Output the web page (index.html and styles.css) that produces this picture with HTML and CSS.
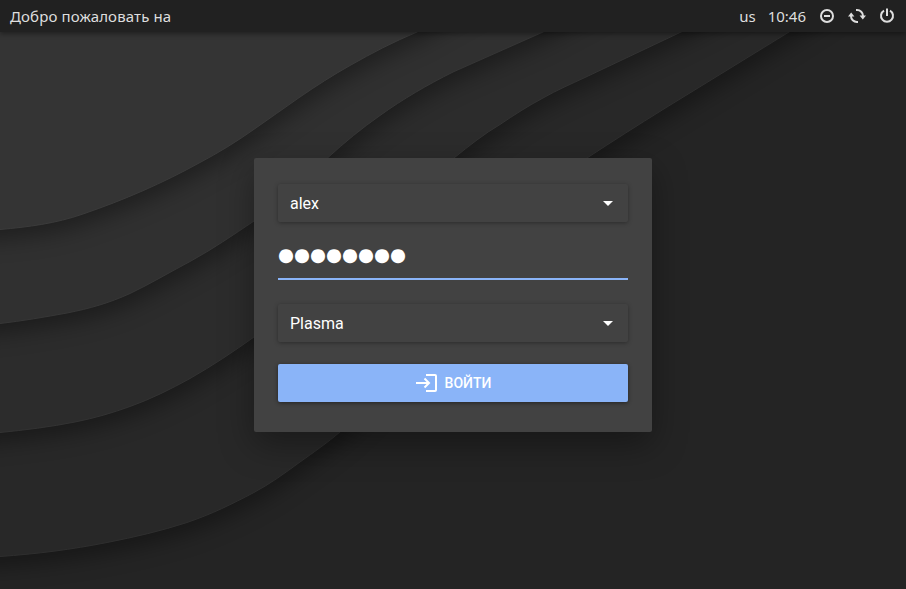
FILE: index.html
```html
<!DOCTYPE html>
<html lang="ru">
<head>
<meta charset="utf-8">
<title>Вход</title>
<link rel="stylesheet" href="styles.css">
</head>
<body>
<svg class="wallpaper" viewBox="0 0 906 589" aria-hidden="true">
  <defs>
    <filter id="shade" filterUnits="userSpaceOnUse" x="-60" y="-60" width="1026" height="709" color-interpolation-filters="sRGB">
      <feDropShadow dx="2" dy="9" stdDeviation="11" flood-color="#000" flood-opacity=".36"/>
    </filter>
  </defs>
  <g stroke-width="1">
    <path filter="url(#shade)" fill="#282828" stroke="#2f2f2f" d="M-50 560C-30 559 -15 557.500 0 556.500C36 554 72 549.500 107 542.500C135 537 161 531 187 522.500C212 514 232 504 253 493C270 484 285 473 300 462C314 452 327 443 340 432C420 366 500 216 587 158C613 141 638 125 663 109.500L789 32L869 -20H-50Z"/>
    <path filter="url(#shade)" fill="#2c2c2c" stroke="#333" d="M-50 438C-30 436 -15 434.500 0 432.500C25 430 50 427 75 422C95 418 112 413 130 406.500C151 399 171 389 190 378.500C212 366 233 352 254 337C330 282 390 208 454 158C470 145 484 134 500 124.500C514 115 528 106 543 98C557 90 571 84 586 77L681 32L781 -20H-50Z"/>
    <path filter="url(#shade)" fill="#303030" stroke="#373737" d="M-50 328C-30 326 -15 325 0 323.500C22 321 45 317 67 313C90 308.500 109 303 130 293.500C150 284 170 272 190 261.500C213 249 233 235 254 221C280 203 304 177 328 157.500C345 142 362 128 380 115.500C403 99 427 85 453 72L543 32L640 -20H-50Z"/>
    <path filter="url(#shade)" fill="#343434" stroke="#3b3b3b" d="M-50 232C-30 231.500 -15 230.500 0 229.500C28 227 56 223.500 83 214C124 200 163 183 200 162.500C218 153 236 142 253 130C269 119 284 108 300 97C316 86 333 75 350 65.500C372 53 393 42 417 32L510 -20H-50Z"/>
  </g>
</svg>
<div class="screen">
  <header class="bar">
    <span class="greeting">Добро пожаловать на</span>
    <div class="status">
      <span class="layout">us</span>
      <span class="clock">10:46</span>
      <svg class="icon" viewBox="0 0 16 16"><circle cx="8" cy="8" r="6" fill="none" stroke="currentColor" stroke-width="2"/><path d="M5 8h6" stroke="currentColor" stroke-width="2"/></svg>
      <svg class="icon restart" viewBox="0 0 18 16"><g fill="none" stroke="currentColor" stroke-width="2"><path d="M3 7.500v.5a6 6 0 0 0 6 6h1"/><path d="M15 8.500V8a6 6 0 0 0-6-6H8"/></g><path fill="currentColor" d="M0 8.500L3.200 4.500L6.400 8.500ZM11.600 7.500L14.800 11.500L18 7.500Z"/></svg>
      <svg class="icon" viewBox="0 0 16 16"><path d="M5 2.600a6 6 0 1 0 6 0M8 .500V8" fill="none" stroke="currentColor" stroke-width="2"/></svg>
    </div>
  </header>
  <main class="stage">
    <form class="card">
      <div class="select"><span class="value">alex</span><i class="caret"></i></div>
      <div class="password">●●●●●●●●</div>
      <div class="select"><span class="value">Plasma</span><i class="caret"></i></div>
      <button class="login" type="button">
        <svg viewBox="0 0 22 18"><path d="M10 1h9q1 0 1 1v14q0 1-1 1H10M0 9h13M8.500 4.500L13 9L8.500 13.500" fill="none" stroke="currentColor" stroke-width="2"/></svg>
        <span>ВОЙТИ</span>
      </button>
    </form>
  </main>
</div>
</body>
</html>
```

FILE: styles.css
```css
* { box-sizing: border-box; }
body {
  margin: 0;
  background: #242424;
  color: #fff;
  font: 16px/20px Roboto, sans-serif;
  overflow: hidden;
}
.wallpaper {
  position: absolute;
  inset: 0;
  width: 906px;
  height: 589px;
}
.screen {
  position: relative;
  display: flex;
  flex-direction: column;
  height: 589px;
}
.bar {
  display: flex;
  align-items: center;
  justify-content: space-between;
  height: 32px;
  padding: 0 11px 0 10px;
  background: #212121;
  box-shadow: 0 2px 5px rgba(0, 0, 0, .4);
  color: #dedede;
  font: 15px/20px "Noto Sans", sans-serif;
}
.greeting { letter-spacing: .13px; }
.status { display: flex; align-items: center; }
.layout { margin-right: 12px; }
.clock { margin-right: 13px; }
.icon { width: 16px; height: 16px; margin-right: 13px; }
.icon:last-child { margin-right: 0; }
.restart { width: 18px; }
.stage {
  flex: 1;
  display: flex;
  justify-content: center;
  align-items: flex-start;
  padding-top: 126px;
}
.card {
  width: 398px;
  height: 274px;
  padding: 26px 24px 30px;
  border-radius: 2px;
  background: #424242;
  box-shadow: 0 12px 34px rgba(0, 0, 0, .36);
}
.select {
  display: flex;
  align-items: center;
  justify-content: space-between;
  height: 38px;
  padding: 0 15px 0 12px;
  border-radius: 2px;
  box-shadow: 0 1px 4px rgba(0, 0, 0, .34);
}
.value { padding-top: 2px; }
.caret {
  border: 5px solid transparent;
  border-top-color: #fff;
  border-bottom: 0;
}
.password {
  height: 58px;
  margin-bottom: 24px;
  padding-top: 13px;
  border-bottom: 2px solid #8ab4f8;
  font: 18.340px/40px "DejaVu Sans", sans-serif;
}
.login {
  display: flex;
  align-items: center;
  justify-content: center;
  gap: 7px;
  width: 100%;
  height: 38px;
  margin-top: 22px;
  padding: 0 0 0 1px;
  border: 0;
  border-radius: 2px;
  background: #8ab4f8;
  box-shadow: 0 1px 4px rgba(0, 0, 0, .45);
  color: #fff;
  font: 500 14px/20px Roboto, sans-serif;
}
.login svg { width: 22px; height: 18px; }
```
